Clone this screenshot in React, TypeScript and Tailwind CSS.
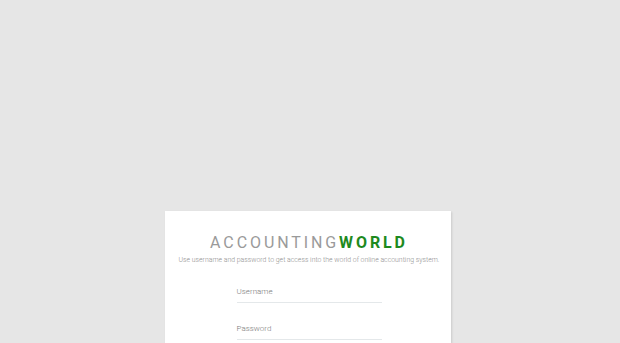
import React from "react";

export default function App() {
  return (
    <div className="w-[620px] h-[343px] overflow-hidden bg-[#e6e6e6] flex flex-col items-center" style={{ fontFamily: "Roboto, 'Liberation Sans', sans-serif" }}>
      <div className="mt-[211px] ml-[-4px] w-[286px] h-[200px] bg-white shadow-[1px_1px_2px_rgba(0,0,0,0.12)] flex flex-col items-center">
        <div className="mt-[22px] ml-[2px] text-[16px] leading-[20px] tracking-[2.9px] whitespace-nowrap">
          <span className="text-[#9a9a9a] font-normal">ACCOUNTING</span>
          <span className="text-[#1e8a1e] font-bold">WORLD</span>
        </div>
        <div className="mt-[2px] ml-[2px] text-[6.9px] leading-[10px] font-light text-[#8f8f8f] whitespace-nowrap">
          Use username and password to get access into the world of online accounting system.
        </div>
        <div className="mt-[22px] w-[145px] ml-[2px] flex flex-col">
          <div className="text-[8px] leading-[10px] font-light text-[#7a7a7a] pb-[5px] border-b border-[#e4e8ea]">Username</div>
          <div className="mt-[21px] text-[8px] leading-[10px] font-light text-[#7a7a7a] pb-[5px] border-b border-[#e4e8ea]">Password</div>
        </div>
      </div>
    </div>
  );
}
